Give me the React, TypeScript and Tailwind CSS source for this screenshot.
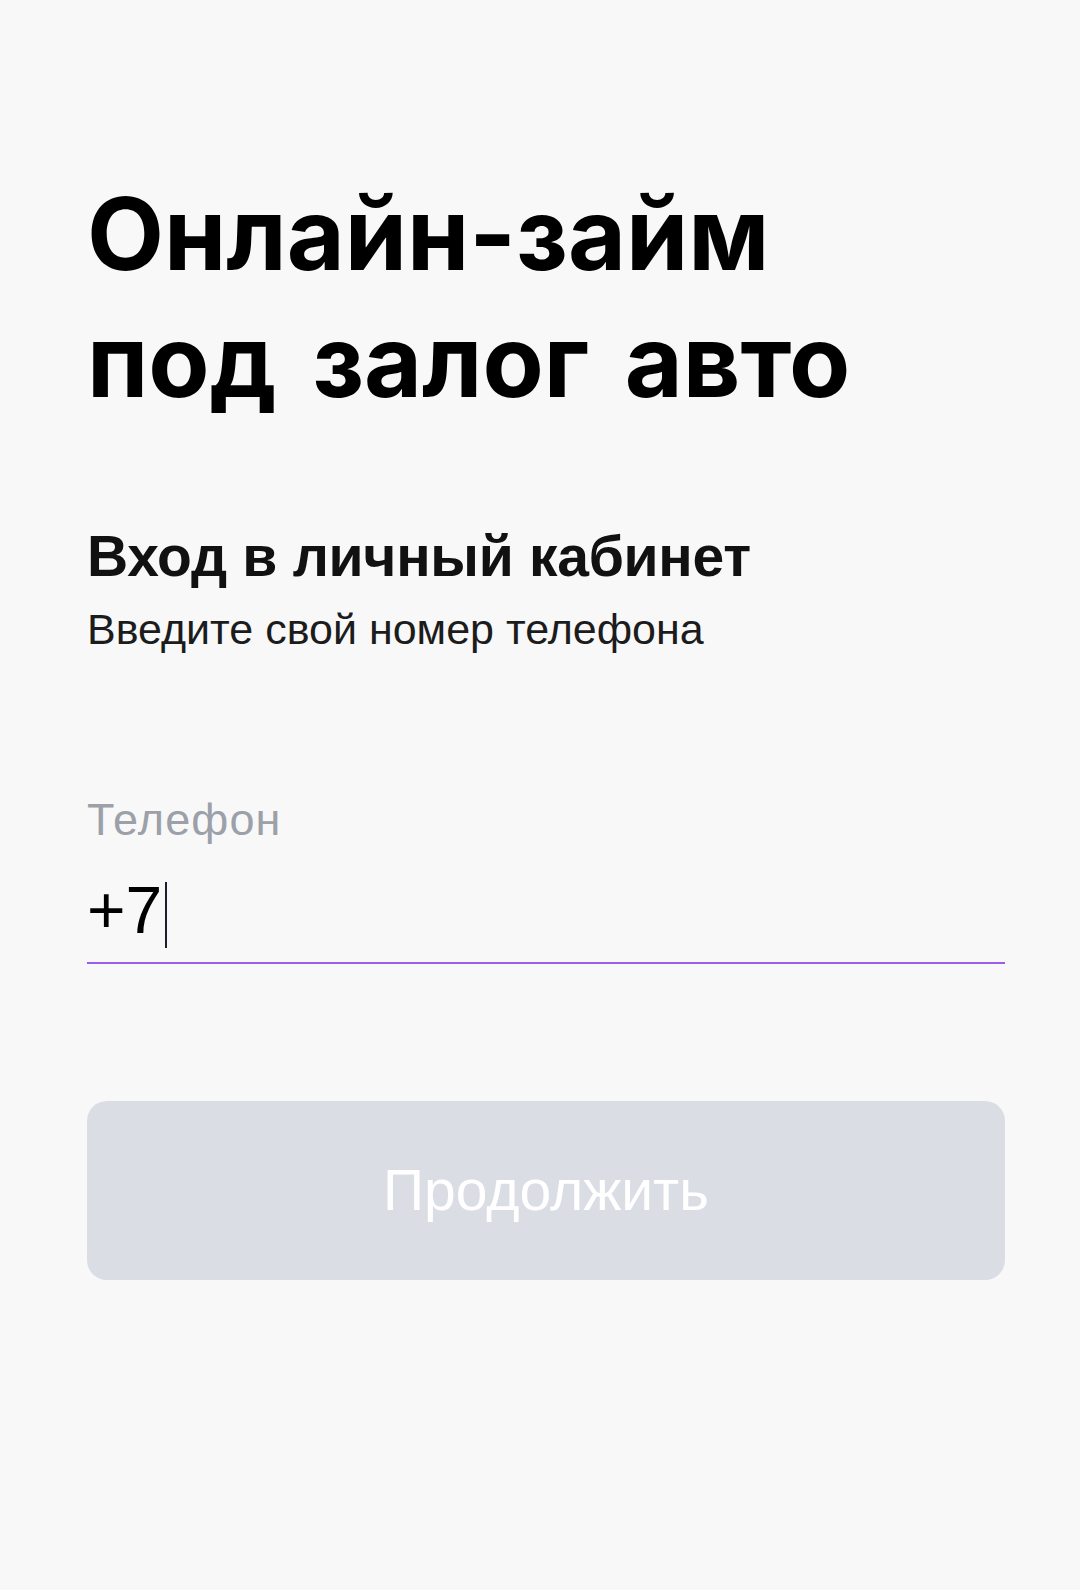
import { useState } from "react";

export default function App() {
  const [phone, setPhone] = useState("+7");

  return (
    <div className="min-h-[1590px] w-full bg-[#f8f8f8] font-['Liberation_Sans',Arial,sans-serif]">
      <main className="flex flex-col pl-[87px] pr-[75px] pt-[170px]">
        {/* Заголовок */}
        <h1 className="font-['Inter',sans-serif] text-[100px] leading-[127px] font-bold text-black [word-spacing:0.12em]">
          Онлайн-займ
          <br />
          под залог авто
        </h1>

        {/* Вход */}
        <section className="mt-[98px] flex flex-col">
          <h2 className="text-[57px] leading-[68px] font-bold tracking-[-0.005em] text-[#111111]">
            Вход в личный кабинет
          </h2>
          <p className="mt-[14px] text-[43px] leading-[50px] text-[#1c1c1c]">
            Введите свой номер телефона
          </p>
        </section>

        {/* Поле телефона */}
        <label className="mt-[141px] flex flex-col">
          <span className="text-[45px] leading-[50px] tracking-[0.025em] text-[#9ca0a9]">
            Телефон
          </span>
          <div className="mt-[25px] flex items-start border-b-2 border-[#9b5cf0] pb-[12px]">
            <input
              type="tel"
              value={phone}
              onChange={(e) => setPhone(e.target.value)}
              className="h-[80px] field-sizing-content bg-transparent text-[66px] leading-[80px] text-black caret-transparent outline-none"
            />
            <span className="ml-[3px] mt-[12px] h-[66px] w-[2px] bg-[#1d1d2b]" />
          </div>
        </label>

        {/* Кнопка */}
        <button
          disabled
          className="mt-[137px] h-[179px] w-full rounded-[20px] bg-[#dadde4] text-[57px] text-white"
        >
          Продолжить
        </button>
      </main>
    </div>
  );
}
